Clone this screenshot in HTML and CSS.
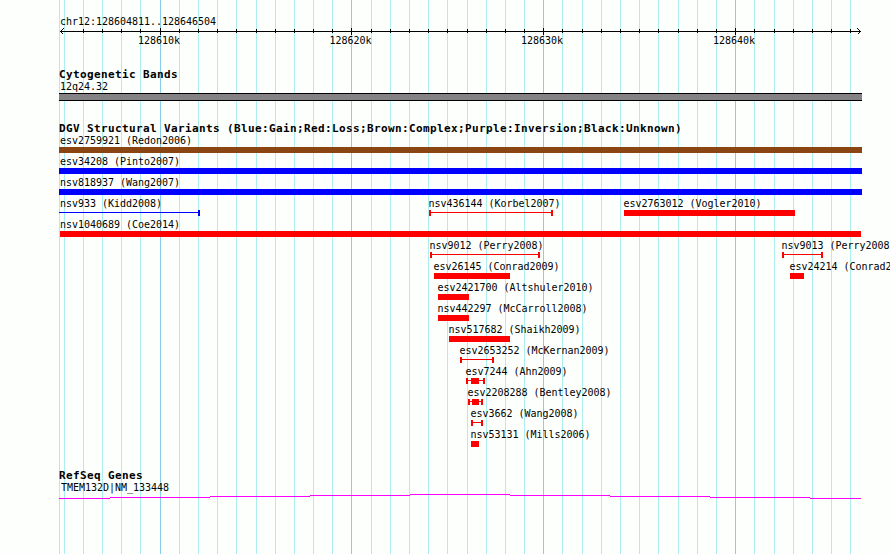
FILE: index.html
```
<!DOCTYPE html>
<html lang="en">
<head>
<meta charset="utf-8">
<title>chr12:128604811..128646504</title>
<link rel="stylesheet" href="styles.css">
</head>
<body>
<main class="browser">
<svg class="gridlines" width="890" height="554" shape-rendering="crispEdges">
<path class="minor" d="M59.5 0v554M64.5 0v554M83.5 0v554M102.5 0v554M121.5 0v554M140.5 0v554M179.5 0v554M198.5 0v554M217.5 0v554M236.5 0v554M256.5 0v554M275.5 0v554M294.5 0v554M313.5 0v554M332.5 0v554M371.5 0v554M390.5 0v554M409.5 0v554M428.5 0v554M447.5 0v554M467.5 0v554M486.5 0v554M505.5 0v554M524.5 0v554M562.5 0v554M582.5 0v554M601.5 0v554M620.5 0v554M639.5 0v554M658.5 0v554M678.5 0v554M697.5 0v554M716.5 0v554M754.5 0v554M774.5 0v554M793.5 0v554M812.5 0v554M831.5 0v554M850.5 0v554"/>
<path class="major" d="M160.5 0v554M351.5 0v554M543.5 0v554M735.5 0v554"/>
</svg>
<div class="tracks">
<section class="ruler">
<div class="label region">chr12:128604811..128646504</div>
<svg class="axis" width="890" height="8" shape-rendering="crispEdges">
<path d="M60 3.5h801M83.5 1v4M102.5 1v4M121.5 1v4M140.5 1v4M160.5 0v7M179.5 1v4M198.5 1v4M217.5 1v4M236.5 1v4M256.5 1v4M275.5 1v4M294.5 1v4M313.5 1v4M332.5 1v4M351.5 0v7M371.5 1v4M390.5 1v4M409.5 1v4M428.5 1v4M447.5 1v4M467.5 1v4M486.5 1v4M505.5 1v4M524.5 1v4M543.5 0v7M562.5 1v4M582.5 1v4M601.5 1v4M620.5 1v4M639.5 1v4M658.5 1v4M678.5 1v4M697.5 1v4M716.5 1v4M735.5 0v7M754.5 1v4M774.5 1v4M793.5 1v4M812.5 1v4M831.5 1v4M850.5 1v4"/>
<path d="M63.5 0.5l-3 3l3 3M857.5 0.5l3 3l-3 3"/>
</svg>
<div class="row scale">
<span class="label" style="margin-left:138px">128610k</span>
<span class="label" style="margin-left:329.5px">128620k</span>
<span class="label" style="margin-left:521px">128630k</span>
<span class="label" style="margin-left:713px">128640k</span>
</div>
</section>
<section class="cyto">
<h2>Cytogenetic Bands</h2>
<div class="label region">12q24.32</div>
<div class="band"></div>
</section>
<section class="variants">
<h2>DGV Structural Variants (Blue:Gain;Red:Loss;Brown:Complex;Purple:Inversion;Black:Unknown)</h2>
<div class="row"><div class="feature complex" style="--x:59px;--w:803px"><span class="label first">esv2759921 (Redon2006)</span><i class="bar"></i></div></div>
<div class="row"><div class="feature gain" style="--x:59px;--w:803px"><span class="label first">esv34208 (Pinto2007)</span><i class="bar"></i></div></div>
<div class="row"><div class="feature gain" style="--x:59px;--w:803px"><span class="label first">nsv818937 (Wang2007)</span><i class="bar"></i></div></div>
<div class="row">
<div class="feature gain" style="--x:59px;--w:141px"><span class="label first">nsv933 (Kidd2008)</span><i class="span open"></i></div>
<div class="feature loss" style="--x:429px;--w:124px"><span class="label">nsv436144 (Korbel2007)</span><i class="span"></i></div>
<div class="feature loss" style="--x:624px;--w:171px"><span class="label">esv2763012 (Vogler2010)</span><i class="bar"></i></div>
</div>
<div class="row"><div class="feature loss" style="--x:60px;--w:801px"><span class="label zero">nsv1040689 (Coe2014)</span><i class="bar"></i></div></div>
<div class="row">
<div class="feature loss" style="--x:430px;--w:110px"><span class="label">nsv9012 (Perry2008)</span><i class="span"></i></div>
<div class="feature loss" style="--x:782px;--w:41px"><span class="label">nsv9013 (Perry2008)</span><i class="span"></i></div>
</div>
<div class="row">
<div class="feature loss" style="--x:434px;--w:76px"><span class="label">esv26145 (Conrad2009)</span><i class="bar"></i></div>
<div class="feature loss" style="--x:790px;--w:14px"><span class="label">esv24214 (Conrad2009)</span><i class="bar"></i></div>
</div>
<div class="row"><div class="feature loss" style="--x:438px;--w:31px"><span class="label">esv2421700 (Altshuler2010)</span><i class="bar"></i></div></div>
<div class="row"><div class="feature loss" style="--x:438px;--w:31px"><span class="label">nsv442297 (McCarroll2008)</span><i class="bar"></i></div></div>
<div class="row"><div class="feature loss" style="--x:449px;--w:61px"><span class="label">nsv517682 (Shaikh2009)</span><i class="bar"></i></div></div>
<div class="row"><div class="feature loss" style="--x:460px;--w:34px"><span class="label">esv2653252 (McKernan2009)</span><i class="span"></i></div></div>
<div class="row"><div class="feature loss" style="--x:466px;--w:19px"><span class="label">esv7244 (Ahn2009)</span><i class="span"><b style="margin-left:3px;width:8px"></b></i></div></div>
<div class="row"><div class="feature loss" style="--x:468px;--w:15px"><span class="label">esv2208288 (Bentley2008)</span><i class="span"><b style="margin-left:2px;width:7px"></b></i></div></div>
<div class="row"><div class="feature loss" style="--x:471px;--w:12px"><span class="label">esv3662 (Wang2008)</span><i class="span"></i></div></div>
<div class="row"><div class="feature loss" style="--x:471px;--w:8px"><span class="label">nsv53131 (Mills2006)</span><i class="bar"></i></div></div>
</section>
<section class="genes">
<h2>RefSeq Genes</h2>
<div class="label region">TMEM132D|NM_133448</div>
<svg class="intron" width="890" height="5" shape-rendering="crispEdges">
<path d="M59 4.5h51M110 3.5h100M210 2.5h100M310 1.5h100M410 .5h100M510 1.5h100M610 2.5h100M710 3.5h100M810 4.5h51"/>
</svg>
</section>
</div>
</main>
</body>
</html>
```
FILE: styles.css
```
body { margin: 0; }
.browser {
  display: grid;
  width: 890px;
  height: 554px;
  overflow: hidden;
  background: #fdfffc;
  color: #000;
  font-family: "DejaVu Sans Mono", monospace;
}
.gridlines, .tracks { grid-area: 1 / 1; min-width: 0; }
.tracks { z-index: 1; }
svg { display: block; }
.minor { stroke: #afeeee; }
.major { stroke: #87ceeb; }
.axis path { fill: none; stroke: #000; }
.label {
  display: block;
  height: 12px;
  font-size: 10px;
  line-height: 12px;
  letter-spacing: -0.02px;
  white-space: nowrap;
}
.region { margin-left: 60px; }
h2 {
  margin: 0 0 0 59px;
  height: 12px;
  font-size: 11px;
  line-height: 14px;
  font-weight: bold;
  letter-spacing: 0.378px;
  white-space: nowrap;
}
.ruler { height: 68px; padding-top: 16px; box-sizing: border-box; }
.scale { margin-top: -1px; }
.row { display: grid; justify-items: start; }
.row > * { grid-area: 1 / 1; }
.cyto { height: 54px; }
.cyto .region { margin-top: 1px; }
.band {
  box-sizing: border-box;
  width: 803px;
  height: 8px;
  margin-left: 59px;
  background: #848284;
  border: solid #000;
  border-width: 1px 0;
}
.variants { height: 347px; }
.variants .row { height: 21px; }
.variants h2 + .row { margin-top: 1px; }
.feature { width: var(--w); margin-left: var(--x); color: var(--tone); }
.feature .label { margin-left: -0.5px; color: #000; }
.feature .first { margin-left: 1px; }
.feature .zero { margin-left: 0; }
.gain { --tone: #00f; }
.loss { --tone: #f00; }
.complex { --tone: #8b4513; }
.bar { display: block; height: 6px; background: currentColor; }
.span {
  display: flex;
  box-sizing: border-box;
  height: 6px;
  border: solid currentColor;
  border-width: 0 2px;
  background: linear-gradient(currentColor, currentColor) 0 2px / 100% 1px no-repeat;
}
.open { border-left: 0; }
.span b { height: 6px; background: currentColor; }
.genes .region { margin: 1px 0 0 61px; }
.intron path { stroke: #f0f; }
```
